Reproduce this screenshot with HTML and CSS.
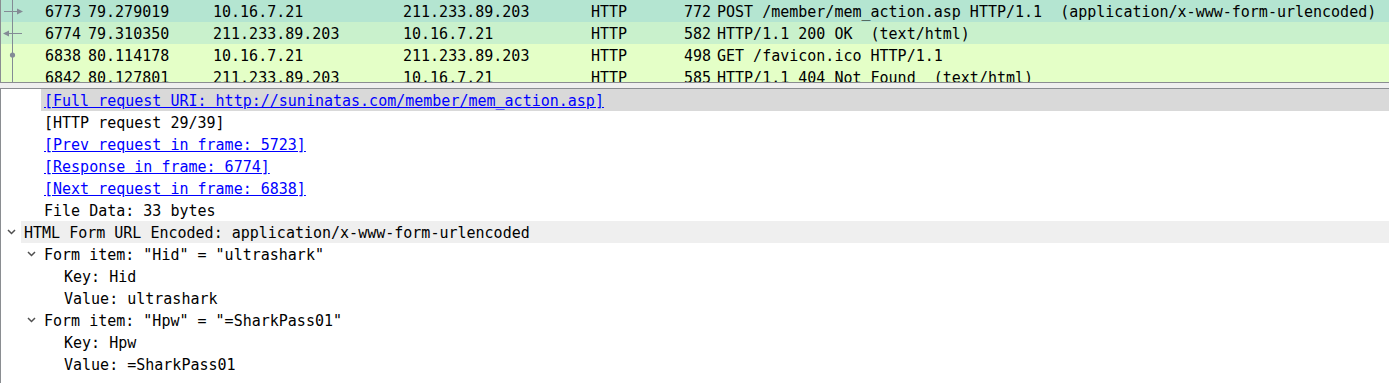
FILE: index.html
```html
<!DOCTYPE html>
<html>
<head>
<meta charset="utf-8">
<link rel="stylesheet" href="styles.css">
</head>
<body>
<div class="app">
  <div class="packet-list">
    <div class="prow c-sel">
      <div class="cell no"><svg class="rel" width="22" height="22" viewBox="0 0 22 22"><line x1="11.5" y1="0" x2="11.5" y2="22"/><line x1="3" y1="11.5" x2="17" y2="11.5"/><polygon points="16,8.5 22,11.5 16,14.5"/></svg><span>6773</span></div>
      <div class="cell">79.279019</div>
      <div class="cell">10.16.7.21</div>
      <div class="cell">211.233.89.203</div>
      <div class="cell">HTTP</div>
      <div class="cell len">772</div>
      <div class="cell info">POST /member/mem_action.asp HTTP/1.1  (application/x-www-form-urlencoded)</div>
    </div>
    <div class="prow c-rel">
      <div class="cell no"><svg class="rel" width="22" height="22" viewBox="0 0 22 22"><line x1="11.5" y1="0" x2="11.5" y2="22"/><line x1="7" y1="11.5" x2="21" y2="11.5"/><polygon points="2,11.5 8,8.5 8,14.5"/></svg><span>6774</span></div>
      <div class="cell">79.310350</div>
      <div class="cell">211.233.89.203</div>
      <div class="cell">10.16.7.21</div>
      <div class="cell">HTTP</div>
      <div class="cell len">582</div>
      <div class="cell info">HTTP/1.1 200 OK  (text/html)</div>
    </div>
    <div class="prow c-http">
      <div class="cell no"><svg class="rel" width="22" height="22" viewBox="0 0 22 22"><line x1="11.5" y1="0" x2="11.5" y2="22"/><circle cx="11.5" cy="11" r="2.6"/></svg><span>6838</span></div>
      <div class="cell">80.114178</div>
      <div class="cell">10.16.7.21</div>
      <div class="cell">211.233.89.203</div>
      <div class="cell">HTTP</div>
      <div class="cell len">498</div>
      <div class="cell info">GET /favicon.ico HTTP/1.1</div>
    </div>
    <div class="prow c-http">
      <div class="cell no"><svg class="rel" width="22" height="22" viewBox="0 0 22 22"><line x1="11.5" y1="0" x2="11.5" y2="22"/></svg><span>6842</span></div>
      <div class="cell">80.127801</div>
      <div class="cell">211.233.89.203</div>
      <div class="cell">10.16.7.21</div>
      <div class="cell">HTTP</div>
      <div class="cell len">585</div>
      <div class="cell info">HTTP/1.1 404 Not Found  (text/html)</div>
    </div>
  </div>
  <div class="splitter"></div>
  <div class="details">
    <div class="node l2"><span class="twisty"></span><span class="label selected"><span class="link">[Full request URI: http://suninatas.com/member/mem_action.asp]</span></span></div>
    <div class="node l2"><span class="twisty"></span><span class="label">[HTTP request 29/39]</span></div>
    <div class="node l2"><span class="twisty"></span><span class="label"><span class="link">[Prev request in frame: 5723]</span></span></div>
    <div class="node l2"><span class="twisty"></span><span class="label"><span class="link">[Response in frame: 6774]</span></span></div>
    <div class="node l2"><span class="twisty"></span><span class="label"><span class="link">[Next request in frame: 6838]</span></span></div>
    <div class="node l2"><span class="twisty"></span><span class="label">File Data: 33 bytes</span></div>
    <div class="node l1"><span class="twisty"><svg width="9" height="6" viewBox="0 0 9 6"><polyline points="1,1 4.5,4.5 8,1"/></svg></span><span class="label hover">HTML Form URL Encoded: application/x-www-form-urlencoded</span></div>
    <div class="node l2"><span class="twisty"><svg width="9" height="6" viewBox="0 0 9 6"><polyline points="1,1 4.5,4.5 8,1"/></svg></span><span class="label">Form item: "Hid" = "ultrashark"</span></div>
    <div class="node l3"><span class="twisty"></span><span class="label">Key: Hid</span></div>
    <div class="node l3"><span class="twisty"></span><span class="label">Value: ultrashark</span></div>
    <div class="node l2"><span class="twisty"><svg width="9" height="6" viewBox="0 0 9 6"><polyline points="1,1 4.5,4.5 8,1"/></svg></span><span class="label">Form item: "Hpw" = "=SharkPass01"</span></div>
    <div class="node l3"><span class="twisty"></span><span class="label">Key: Hpw</span></div>
    <div class="node l3"><span class="twisty"></span><span class="label">Value: =SharkPass01</span></div>
  </div>
</div>
</body>
</html>
```
FILE: styles.css
```css
html, body {
  margin: 0;
  padding: 0;
  background: #ffffff;
}
body {
  font-family: "DejaVu Sans Mono", "Liberation Mono", monospace;
  font-size: 15px;
  color: #000000;
  width: 1389px;
  height: 383px;
  overflow: hidden;
}
.app {
  display: flex;
  flex-direction: column;
}
.packet-list {
  height: 82px;
  overflow: hidden;
  border-left: 1px solid #8a8d91;
  border-bottom: 1px solid #8a8d91;
}
.prow {
  display: grid;
  grid-template-columns: 83px 125px 190px 188px 80px 47px 1fr;
  height: 22px;
  white-space: pre;
}
.c-sel { background: #b4e5d1; }
.c-rel { background: #c9f1cc; }
.c-http { background: #e4ffc7; }
.cell {
  box-sizing: border-box;
  height: 22px;
  padding-top: 1px;
  line-height: 22px;
  padding-left: 4px;
  overflow: hidden;
}
.cell.no {
  padding-left: 0;
  padding-right: 3px;
  display: flex;
  justify-content: space-between;
}
.cell.len {
  padding-left: 0;
  padding-right: 3px;
  text-align: right;
}
.cell.info {
  padding-left: 3px;
}
.rel {
  flex: none;
  display: block;
  margin-top: -1px;
}
.rel line {
  stroke: #838b95;
  stroke-width: 1;
}
.rel polygon, .rel circle {
  fill: #838b95;
}
.splitter {
  height: 5px;
  background: #efefef;
}
.details {
  border-left: 1px solid #8a8d91;
  border-top: 1px solid #8a8d91;
  height: 300px;
}
.node {
  display: flex;
  height: 22px;
  white-space: pre;
}
.l1 { padding-left: 0; }
.l2 { padding-left: 20px; }
.l3 { padding-left: 40px; }
.twisty {
  flex: none;
  width: 20px;
  display: flex;
  align-items: center;
  justify-content: center;
}
.twisty svg {
  display: block;
}
.twisty polyline {
  fill: none;
  stroke: #505050;
  stroke-width: 1.5;
}
.label {
  flex: 1;
  box-sizing: border-box;
  height: 22px;
  padding-top: 1px;
  line-height: 22px;
  padding-left: 3px;
  overflow: hidden;
}
.label.selected { background: #d9d9d9; }
.label.hover { background: #efefef; }
.link {
  color: #0000ff;
  text-decoration: underline;
}
```
